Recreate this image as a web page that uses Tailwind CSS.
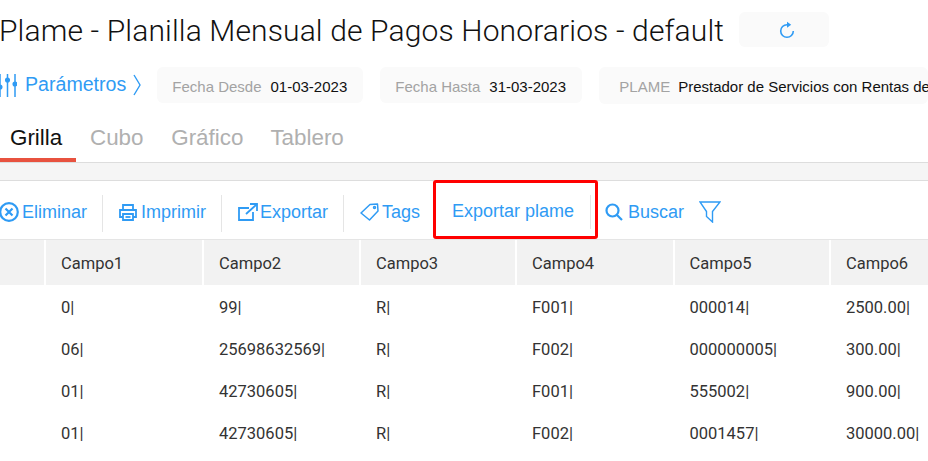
<!DOCTYPE html>
<html><head><meta charset="utf-8"><script src="https://cdn.jsdelivr.net/npm/@tailwindcss/browser@4"></script></head>
<body class="bg-white overflow-hidden">
<div class="w-[928px] h-[461px] overflow-hidden font-['Roboto',sans-serif]">
  <!-- title -->
  <div class="h-[62px] flex items-start pt-[12px]">
    <h1 class="-ml-[1px] h-[35px] leading-[37px] text-[30px] font-light text-[#111] whitespace-nowrap tracking-[0.135px]">Plame - Planilla Mensual de Pagos Honorarios - default</h1>
    <button class="ml-[15px] w-[90px] h-[35px] rounded-[6px] bg-[#fafafa] flex items-center pl-[40px]">
      <svg width="16" height="18" viewBox="0 0 16 18" fill="none"><path d="M8 3.700A6.300 6.300 0 1 0 14.300 10" stroke="#2f9bf4" stroke-width="1.600"/><path d="M8 .8l4.200 3-4.200 3z" fill="#2f9bf4"/></svg>
    </button>
  </div>
  <!-- params -->
  <div class="h-[42px] flex items-start whitespace-nowrap">
    <div class="h-[36px] flex items-center -ml-[2px] mt-[5px] text-[#2f9bf4]">
      <svg width="19" height="23" viewBox="0 0 19 23" fill="none" stroke="#2f9bf4" stroke-width="1.500"><path d="M2 0v23M9.500 0v23M17 0v23"/><circle cx="2" cy="13" r="1.800" fill="#2f9bf4"/><circle cx="9.500" cy="6" r="1.800" fill="#2f9bf4"/><circle cx="17" cy="10" r="1.800" fill="#2f9bf4"/></svg>
      <span class="ml-[8px] text-[19.600px] font-['Liberation_Sans',sans-serif]">Parámetros</span>
      <svg class="ml-[7px]" width="8" height="22" viewBox="0 0 8 22" fill="none" stroke="#2f9bf4" stroke-width="1.400"><path d="M1 1l6 10-6 10"/></svg>
    </div>
    <div class="ml-[16px] mt-[5px] h-[36px] w-[206px] rounded-[6px] bg-[#fafafa] flex items-center pl-[15px] pt-[4px] text-[15px] font-['Liberation_Sans',sans-serif]">
      <span class="text-[#a3a3a3]">Fecha Desde</span><span class="ml-[9px] text-[#111]">01-03-2023</span>
    </div>
    <div class="ml-[17px] mt-[5px] h-[36px] w-[202px] rounded-[6px] bg-[#fafafa] flex items-center pl-[15px] pt-[4px] text-[15px] font-['Liberation_Sans',sans-serif]">
      <span class="text-[#a3a3a3]">Fecha Hasta</span><span class="ml-[9px] text-[#111]">31-03-2023</span>
    </div>
    <div class="ml-[17px] mt-[5px] h-[37px] flex-1 rounded-[6px] bg-[#fafafa] flex items-center pl-[20px] pt-[4px] text-[15px] font-['Liberation_Sans',sans-serif] overflow-hidden">
      <span class="text-[#a3a3a3]">PLAME</span><span class="ml-[8px] text-[#111]">Prestador de Servicios con Rentas de</span>
    </div>
  </div>
  <!-- tabs -->
  <div class="h-[58px] flex items-stretch border-b border-[#ddd] font-['Liberation_Sans',sans-serif] text-[22.400px] text-[#b0b0b0] box-content">
    <div class="w-[76px] pl-[10px] pt-[17px] text-[#111] border-b-[4px] border-[#e8523f]">Grilla</div>
    <div class="ml-[14px] pt-[17px]">Cubo</div>
    <div class="ml-[27.700px] pt-[17px]">Gráfico</div>
    <div class="ml-[27px] pt-[17px]">Tablero</div>
  </div>
  <div class="h-[17px] bg-[#f5f5f5] border-b border-[#ddd] box-content"></div>
  <!-- toolbar -->
  <div class="relative h-[58px] flex items-center text-[18px] font-['Liberation_Sans',sans-serif] text-[#2f9bf4] whitespace-nowrap border-b border-[#e5e5e5] box-content">
    <div class="flex items-center w-[103px] h-[37px] mt-[7px] pb-[3px] border-r border-[#e5e5e5]">
      <svg width="20" height="20" viewBox="0 0 20 20" fill="none" stroke="#2f9bf4" stroke-width="2.200"><circle cx="9" cy="10" r="8.800"/><path d="M5.500 6.500l7 7M12.500 6.500l-7 7"/></svg>
      <span class="ml-[2px]">Eliminar</span>
    </div>
    <div class="flex items-center w-[119px] h-[37px] mt-[7px] pb-[3px] border-r border-[#e5e5e5] pl-[16px]">
      <svg width="18" height="17" viewBox="0 0 18 17" fill="none" stroke="#2f9bf4" stroke-width="1.800"><path d="M4 6V1h10v5M4 13H1V6h16v7h-3"/><path d="M4 10h10v6H4z"/><path d="M6.500 13h5"/></svg>
      <span class="ml-[4px]">Imprimir</span>
    </div>
    <div class="flex items-center w-[122px] h-[37px] mt-[7px] pb-[3px] border-r border-[#e5e5e5] pl-[16px]">
      <svg width="20" height="18" viewBox="0 0 20 18" fill="none" stroke="#2f9bf4" stroke-width="1.800"><path d="M11 5H1v12h14V9"/><path d="M8 11l11-10"/><path d="M12 1h7v7"/></svg>
      <span class="ml-[2px]">Exportar</span>
    </div>
    <div class="flex items-center w-[89px] h-[37px] mt-[7px] pb-[3px] pl-[16px]">
      <svg width="19" height="18" viewBox="0 0 19 18" fill="none" stroke="#2f9bf4" stroke-width="1.500"><path d="M1 10l9-8.500 7.500-.5.500 7-8.500 9z" stroke-linejoin="round"/><circle cx="14.500" cy="4.500" r="1"/></svg>
      <span class="ml-[3px]">Tags</span>
    </div>
    <div class="w-[165px] h-[59px] -mt-px border-[3px] border-[#f00] rounded-[3px] flex items-center pl-[16px] pt-[4px] relative shrink-0">
      Exportar plame
      <span class="absolute right-[4px] top-[12px] h-[34px] w-px bg-[#e5e5e5]"></span>
    </div>
    <div class="flex items-center ml-[7px] mt-[4px]">
      <svg width="18" height="18" viewBox="0 0 18 18" fill="none" stroke="#2f9bf4" stroke-width="2.200"><circle cx="7.500" cy="7.500" r="6"/><path d="M12 12l5 5"/></svg>
      <span class="ml-[5px]">Buscar</span>
    </div>
    <svg class="ml-[15px] mt-[3px]" width="22" height="22" viewBox="0 0 22 22" fill="none" stroke="#2f9bf4" stroke-width="1.400"><path d="M1 1h20l-7.500 9.500V21L7.500 15.500V10.500z"/></svg>
  </div>
  <!-- table -->
  <div class="text-[16.500px] text-[#333]">
    <div class="grid grid-cols-[46px_158px_157px_156px_157.500px_156.500px_1fr] h-[45px] bg-[#f2f2f2] items-center">
      <div class="h-full border-r-2 border-white"></div>
      <div class="h-full flex items-center pl-[15px] pt-[3px] border-r-2 border-white">Campo1</div>
      <div class="h-full flex items-center pl-[15px] pt-[3px] border-r-2 border-white">Campo2</div>
      <div class="h-full flex items-center pl-[15px] pt-[3px] border-r-2 border-white">Campo3</div>
      <div class="h-full flex items-center pl-[15px] pt-[3px] border-r-2 border-white">Campo4</div>
      <div class="h-full flex items-center pl-[15px] pt-[3px] border-r-2 border-white">Campo5</div>
      <div class="h-full flex items-center pl-[15px] pt-[3px]">Campo6</div>
    </div>
    <div class="grid grid-cols-[46px_158px_157px_156px_157.500px_156.500px_1fr] h-[42px] items-center pt-[5px]"><div></div><div class="pl-[15px]">0|</div><div class="pl-[15px]">99|</div><div class="pl-[15px]">R|</div><div class="pl-[15px]">F001|</div><div class="pl-[15px]">000014|</div><div class="pl-[15px]">2500.00|</div></div>
    <div class="grid grid-cols-[46px_158px_157px_156px_157.500px_156.500px_1fr] h-[42px] items-center pt-[5px]"><div></div><div class="pl-[15px]">06|</div><div class="pl-[15px]">25698632569|</div><div class="pl-[15px]">R|</div><div class="pl-[15px]">F002|</div><div class="pl-[15px]">000000005|</div><div class="pl-[15px]">300.00|</div></div>
    <div class="grid grid-cols-[46px_158px_157px_156px_157.500px_156.500px_1fr] h-[42px] items-center pt-[5px]"><div></div><div class="pl-[15px]">01|</div><div class="pl-[15px]">42730605|</div><div class="pl-[15px]">R|</div><div class="pl-[15px]">F001|</div><div class="pl-[15px]">555002|</div><div class="pl-[15px]">900.00|</div></div>
    <div class="grid grid-cols-[46px_158px_157px_156px_157.500px_156.500px_1fr] h-[42px] items-center pt-[5px]"><div></div><div class="pl-[15px]">01|</div><div class="pl-[15px]">42730605|</div><div class="pl-[15px]">R|</div><div class="pl-[15px]">F002|</div><div class="pl-[15px]">0001457|</div><div class="pl-[15px]">30000.00|</div></div>
  </div>
</div>
</body></html>
